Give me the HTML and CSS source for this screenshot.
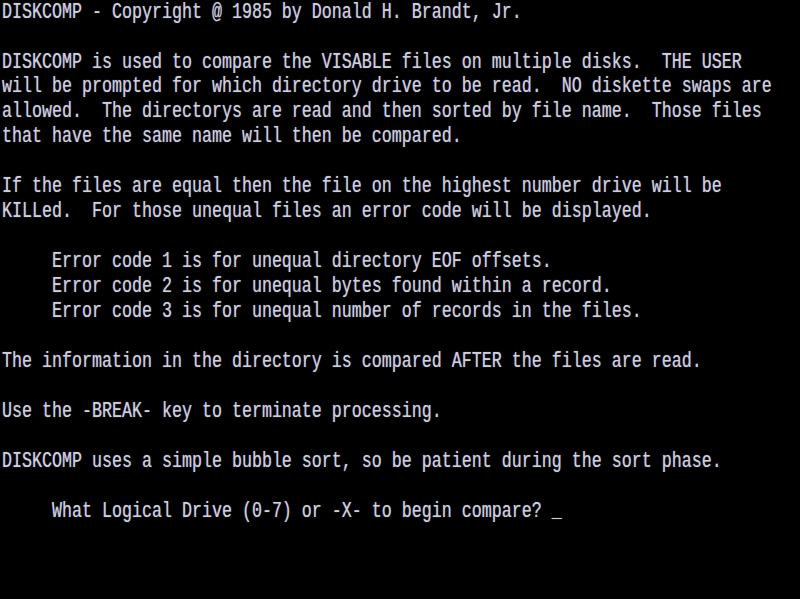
FILE: index.html
```html
<!DOCTYPE html>
<html>
<head>
<meta charset="utf-8">
<link rel="stylesheet" href="styles.css">
</head>
<body>
<div class="screen">
<pre class="text">DISKCOMP - Copyright @ 1985 by Donald H. Brandt, Jr.

DISKCOMP is used to compare the VISABLE files on multiple disks.  THE USER
will be prompted for which directory drive to be read.  NO diskette swaps are
allowed.  The directorys are read and then sorted by file name.  Those files
that have the same name will then be compared.

If the files are equal then the file on the highest number drive will be
KILLed.  For those unequal files an error code will be displayed.

     Error code 1 is for unequal directory EOF offsets.
     Error code 2 is for unequal bytes found within a record.
     Error code 3 is for unequal number of records in the files.

The information in the directory is compared AFTER the files are read.

Use the -BREAK- key to terminate processing.

DISKCOMP uses a simple bubble sort, so be patient during the sort phase.

     What Logical Drive (0-7) or -X- to begin compare? _</pre>
</div>
</body>
</html>
```

FILE: styles.css
```css
html, body {
  margin: 0;
  padding: 0;
  background: #000;
  overflow: hidden;
}
.screen {
  width: 800px;
  height: 599px;
  background: #000;
  overflow: hidden;
}
.text {
  margin: 0;
  padding: 0 0 0 2px;
  font-family: "Liberation Mono", "DejaVu Sans Mono", monospace;
  font-size: 16.667px;
  line-height: 18.49px;
  color: #cfcfe2;
  transform: scaleY(1.35);
  transform-origin: 0 0;
  text-shadow: 0 0 1px rgba(200, 200, 222, 0.6);
}
```
